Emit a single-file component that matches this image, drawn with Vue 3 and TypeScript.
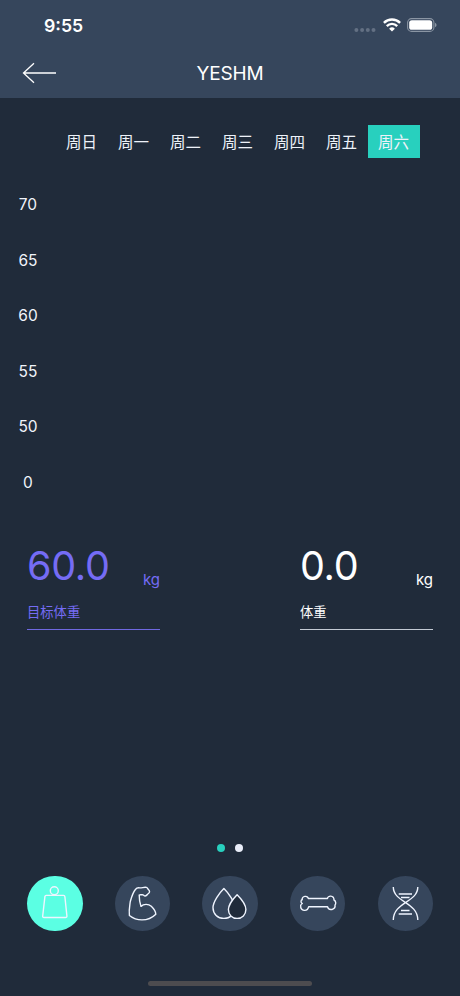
<script setup lang="ts">
import { ref } from 'vue'

type Metric = 'weight' | 'muscle' | 'water' | 'bone' | 'dna'

interface Reading {
  value: string
  unit: string
  label: string
  target: boolean
}

const days: string[] = ['周日', '周一', '周二', '周三', '周四', '周五', '周六']
const selectedDay = ref<number>(6)

const ticks: number[] = [70, 65, 60, 55, 50, 0]

const readings: Reading[] = [
  { value: '60.0', unit: 'kg', label: '目标体重', target: true },
  { value: '0.0', unit: 'kg', label: '体重', target: false },
]

const pages: number[] = [0, 1]
const page = ref<number>(0)

const metrics: Metric[] = ['weight', 'muscle', 'water', 'bone', 'dna']
const metric = ref<Metric>('weight')
</script>

<template>
  <div class="screen">
    <header class="top">
      <div class="status">
        <span class="clock">9:55</span>
        <div class="indicators">
          <svg class="signal" width="24" height="6" viewBox="0 0 24 6">
            <circle cx="3.4" cy="3" r="2" />
            <circle cx="9.1" cy="3" r="2" />
            <circle cx="14.8" cy="3" r="2" />
            <circle cx="20.5" cy="3" r="2" />
          </svg>
          <svg class="wifi" width="18" height="14" viewBox="0 0 18 14">
            <path d="M0.9 4.9A11.4 11.4 0 0 1 17.1 4.9" />
            <path d="M3.8 8.1A7.3 7.3 0 0 1 14.2 8.1" />
            <path class="solid" d="M9 13.6L6.1 10.7A4.1 4.1 0 0 1 11.9 10.7Z" />
          </svg>
          <svg class="battery" width="30" height="14" viewBox="0 0 30 14">
            <rect class="shell" x="0.6" y="0.6" width="26.3" height="12.8" rx="4" />
            <rect class="charge" x="2.2" y="2.2" width="23" height="9.6" rx="2.6" />
            <path class="tip" d="M28 4.8Q29.6 5.5 29.6 7T28 9.2Z" />
          </svg>
        </div>
      </div>
      <div class="nav">
        <button class="back" aria-label="返回">
          <svg width="36" height="24" viewBox="0 0 36 24">
            <path d="M34 12H1.5M12 2.3L1.5 12L12 21.7" />
          </svg>
        </button>
        <h1 class="title">YESHM</h1>
      </div>
    </header>

    <nav class="days">
      <button
        v-for="(day, i) in days"
        :key="day"
        class="day"
        :class="{ active: i === selectedDay }"
        @click="selectedDay = i"
      >{{ day }}</button>
    </nav>

    <div class="axis">
      <span v-for="tick in ticks" :key="tick" class="tick">{{ tick }}</span>
    </div>

    <section class="readings">
      <div
        v-for="reading in readings"
        :key="reading.label"
        class="reading"
        :class="{ target: reading.target }"
      >
        <div class="figure">
          <span class="value">{{ reading.value }}</span>
          <span class="unit">{{ reading.unit }}</span>
        </div>
        <div class="label">{{ reading.label }}</div>
        <div class="rule"></div>
      </div>
    </section>

    <div class="pager">
      <i v-for="p in pages" :key="p" class="dot" :class="{ current: p === page }" @click="page = p"></i>
    </div>

    <nav class="metrics">
      <button
        v-for="m in metrics"
        :key="m"
        class="metric"
        :class="{ active: m === metric }"
        @click="metric = m"
      >
        <svg viewBox="0 0 55.5 55.5">
          <g v-if="m === 'weight'">
            <circle cx="27.3" cy="14.7" r="4" />
            <path d="M19.2 19.4H36.5Q37.8 19.4 37.9 20.7L39.9 40Q40 41.5 38.5 41.5H17Q15.5 41.5 15.7 40L17.9 20.7Q18 19.4 19.2 19.4Z" />
          </g>
          <path
            v-else-if="m === 'muscle'"
            d="M20.6 13.2C21.6 11.9 23 11.6 24.8 11.9C27 12 29 11 31.4 11.4C32.6 11.7 32.6 13 33.6 13.8C35 15 34.8 16.6 33.4 17.5C32.3 18.2 32 19.8 30.2 20C28.8 20.1 28.6 18.6 27.3 18.6C26 18.9 25 18.4 24.2 19C24.2 22.5 24.6 26.5 26 30.4C28.6 27.6 33.6 27.8 36.3 30.3C38.3 32.2 40.6 35.6 40.8 38.2C37 42 31.5 43.9 27 43.9C22 43.9 17.5 42 14.4 39.5C13.7 34 14.8 29.5 15.3 25.5C16.5 21 18.2 16 20.6 13.2Z"
          />
          <g v-else-if="m === 'water'">
            <path d="M21.9 12.6C26.5 17.1 32.8 25.8 32.8 31.8C32.8 38 28 42.4 21.9 42.4C15.8 42.4 11 38 11 31.8C11 25.8 17.3 17.1 21.9 12.6Z" />
            <path class="dark" d="M35.1 18.7C38.7 22.3 43.9 29.2 43.9 33.6C43.9 38.7 40.1 42.4 35.1 42.4C30.1 42.4 26.4 38.7 26.4 33.6C26.4 29.2 31.5 22.3 35.1 18.7Z" />
          </g>
          <path
            v-else-if="m === 'bone'"
            d="M18.3 22.5H37.5C37.5 19.4 44 18.9 44 24C46.2 25.1 46 28.3 45 29C46 34 38.5 35.3 37.5 30.7H18.7C17.6 36.2 10 35.3 10.7 29.7C10.5 28.9 11.3 28.1 12.3 27.5C10.2 26.4 11 23.8 12.2 23.7C11.6 19.7 17.8 19.3 18.3 22.5Z"
          />
          <g v-else>
            <path d="M15.3 11C15.3 26.5 39.8 26 39.8 44M39.8 11C39.8 26.5 15.3 26 15.3 44" />
            <path d="M20.7 18H34M23 21.5H31.5M23 34.5H31.5M20.7 38H34" />
          </g>
        </svg>
      </button>
    </nav>

    <div class="home"></div>
  </div>
</template>

<style>
body {
  background: #202b3a;
}
</style>

<style scoped>
.screen {
  box-sizing: border-box;
  display: flex;
  flex-direction: column;
  height: 996px;
  overflow: hidden;
  background: #202b3a;
  color: #fff;
  font-family: Inter, "Noto Sans CJK SC", sans-serif;
}

button {
  margin: 0;
  padding: 0;
  border: 0;
  background: none;
  color: inherit;
  font: inherit;
}

svg {
  display: block;
  fill: none;
}

.top {
  flex: none;
  height: 98px;
  background: #36465c;
}

.status {
  display: flex;
  align-items: center;
  justify-content: space-between;
  height: 50px;
  padding: 1px 23px 0 44px;
  box-sizing: border-box;
}

.clock {
  font-size: 17.7px;
  font-weight: 600;
}

.indicators {
  display: flex;
  align-items: center;
  gap: 6px;
  margin-top: -1px;
}

.signal {
  margin-top: 9px;
  fill: #637083;
}

.wifi {
  stroke: #fff;
  stroke-width: 2.4;
}

.wifi .solid {
  fill: #fff;
  stroke: none;
}

.battery .shell {
  stroke: #8a95a3;
  stroke-width: 1.1;
}

.battery .charge {
  fill: #fff;
}

.battery .tip {
  fill: #8a95a3;
}

.nav {
  display: grid;
  grid-template-columns: 60px 1fr 60px;
  align-items: center;
  height: 48px;
}

.back {
  padding-left: 22px;
  margin-top: -2px;
}

.back svg {
  stroke: #fff;
  stroke-width: 1.3;
}

.title {
  margin: 0;
  font-size: 19px;
  font-weight: 400;
  letter-spacing: -0.2px;
  line-height: 24px;
  text-align: center;
}

.days {
  display: flex;
  margin: 27px 40px 0 55.5px;
}

.day {
  flex: 0 0 52px;
  height: 33px;
  padding-bottom: 2px;
  color: #eef2f9;
  font-size: 15.5px;
  font-weight: 400;
}

.day.active {
  background: #28d0be;
}

.axis {
  display: flex;
  flex-direction: column;
  width: 56px;
  margin-top: 19px;
}

.tick {
  height: 55.6px;
  color: #f0f4fa;
  font-size: 15.5px;
  line-height: 56px;
  text-align: center;
}

.readings {
  display: flex;
  justify-content: space-between;
  margin: 27px 27px 0;
}

.reading {
  width: 133px;
}

.reading.target {
  color: #756cf5;
}

.rule {
  height: 1px;
  background: #c3cad4;
}

.target .rule {
  background: #6f68e0;
}

.figure {
  display: flex;
  align-items: baseline;
  justify-content: space-between;
  height: 56px;
}

.value {
  font-size: 39.5px;
  font-weight: 400;
  letter-spacing: -0.3px;
  line-height: 56px;
}

.unit {
  position: relative;
  top: 5px;
  font-size: 15px;
}

.label {
  height: 35px;
  font-size: 13.3px;
  font-weight: 400;
  line-height: 20px;
  padding-top: 8px;
  box-sizing: border-box;
}

.pager {
  display: flex;
  justify-content: center;
  gap: 10px;
  margin-top: auto;
}

.dot {
  width: 8px;
  height: 8px;
  border-radius: 50%;
  background: #e9edf8;
}

.dot.current {
  background: #28d0be;
}

.metrics {
  display: flex;
  justify-content: space-between;
  margin: 23.5px 27px 0;
}

.metric {
  width: 55.5px;
  height: 55.5px;
  border-radius: 50%;
  background: #36465c;
}

.metric svg {
  width: 100%;
  height: 100%;
  stroke: #f0f5ff;
  stroke-width: 1.4;
  stroke-linejoin: round;
}

.metric.active {
  background: #5bffe3;
}

.dark {
  fill: #202b3a;
}

.home {
  width: 164px;
  height: 5px;
  margin: 50px auto 9.8px;
  border-radius: 3px;
  background: #4d4c4f;
}
</style>
